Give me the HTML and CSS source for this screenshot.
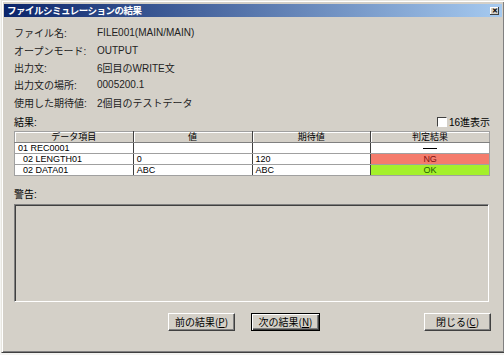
FILE: index.html
```html
<!DOCTYPE html>
<html lang="ja">
<head>
<meta charset="UTF-8">
<title>ファイルシミュレーションの結果</title>
<link rel="stylesheet" href="styles.css">
</head>
<body>
<div class="window">
	<div class="titlebar">
		<span class="title">ファイルシミュレーションの結果</span>
		<span class="close">&#x2715;</span>
	</div>
	<div class="content">
		<div class="info">
			<span>ファイル名:</span><span>FILE001(MAIN/MAIN)</span>
			<span>オープンモード:</span><span>OUTPUT</span>
			<span>出力文:</span><span>6回目のWRITE文</span>
			<span>出力文の場所:</span><span>0005200.1</span>
			<span>使用した期待値:</span><span>2個目のテストデータ</span>
		</div>
		<div class="result-head">
			<span>結果:</span>
			<label class="check"><span class="box"></span>16進表示</label>
		</div>
		<table class="grid">
			<thead>
				<tr><th>データ項目</th><th>値</th><th>期待値</th><th>判定結果</th></tr>
			</thead>
			<tbody>
				<tr><td>01&nbsp;REC0001</td><td></td><td></td><td class="judge"><span class="dash"></span></td></tr>
				<tr><td class="lv2">02&nbsp;LENGTH01</td><td>0</td><td>120</td><td class="judge ng">NG</td></tr>
				<tr><td class="lv2">02&nbsp;DATA01</td><td>ABC</td><td>ABC</td><td class="judge ok">OK</td></tr>
			</tbody>
		</table>
		<div class="warn-label">警告:</div>
		<div class="warn-box"></div>
		<div class="buttons">
			<div class="center-btns">
				<button class="btn">前の結果(<u>P</u>)</button>
				<button class="btn default">次の結果(<u>N</u>)</button>
			</div>
			<button class="btn close-btn">閉じる(<u>C</u>)</button>
		</div>
	</div>
</div>
</body>
</html>
```

FILE: styles.css
```css
body {
	margin: 0;
	background: #f4f4f2;
	font-family: "Liberation Sans", "Noto Sans CJK JP", sans-serif;
	font-size: 10px;
	color: #000;
}

.window {
	width: 498px;
	height: 346px;
	margin: 0 0 0 1px;
	background: #d4d0c8;
	border: 1px solid;
	border-color: #e8e6e0 #404040 #404040 #e8e6e0;
	box-shadow: inset 1px 1px #fff, inset -1px -1px #808080;
	padding: 3px 2px 2px 2px;
	display: flex;
	flex-direction: column;
}

.titlebar {
	height: 13px;
	background: linear-gradient(to right, #0a246a, #a6caf0);
	display: flex;
	align-items: center;
	justify-content: space-between;
	padding: 0 3px 0 3px;
}

.title {
	color: #fff;
	font-weight: bold;
	font-size: 9.5px;
	letter-spacing: -0.5px;
	line-height: 13px;
	font-family: "Noto Sans CJK JP", sans-serif;
}

.close {
	width: 9px;
	height: 8px;
	background: #d4d0c8;
	box-shadow: inset -1px -1px #404040, inset 1px 1px #fff;
	font-size: 7px;
	line-height: 8px;
	text-align: center;
	font-weight: bold;
	color: #000;
}

.content {
	flex: 1;
	display: flex;
	flex-direction: column;
	padding: 7px 12px 0 10px;
}

.info {
	display: grid;
	grid-template-columns: 83px auto;
	grid-auto-rows: 17.4px;
	align-items: center;
	color: #222;
}

.result-head {
	display: flex;
	justify-content: space-between;
	align-items: center;
	margin-top: 4px;
	height: 14px;
}

.check {
	display: flex;
	align-items: center;
	gap: 2px;
}

.box {
	width: 8px;
	height: 8px;
	background: #fff;
	border: 1px solid;
	border-color: #404040 #fff #fff #404040;
}

.grid {
	margin-top: 2px;
	width: 476px;
	border-collapse: collapse;
	table-layout: fixed;
	border: 1px solid #a0a0a0;
	font-size: 9px;
}

.grid th {
	background: #d4d0c8;
	font-weight: normal;
	height: 10px;
	line-height: 10px;
	padding: 0;
	border-right: 1px solid #404040;
	border-bottom: 1px solid #808080;
	box-shadow: inset 1px 1px #fff;
	text-align: center;
	font-family: "Noto Sans CJK JP", sans-serif;
	font-size: 9px;
	overflow: hidden;
}

.grid th:last-child {
	border-right: none;
}

.grid td {
	background: #fff;
	height: 10px;
	line-height: 10px;
	padding: 0 3px;
	border-right: 1px solid #404040;
	border-bottom: 1px solid #a0a0a0;
	white-space: nowrap;
	overflow: hidden;
}

.grid td:last-child {
	border-right: none;
}

.grid td.lv2 {
	padding-left: 8px;
}

.grid td.judge {
	text-align: center;
}

.dash {
	display: inline-block;
	width: 14px;
	height: 1px;
	background: #000;
	vertical-align: middle;
}

.grid td.ng {
	background: #f47c6c;
	color: #801010;
}

.grid td.ok {
	background: #a4f02c;
	color: #206000;
}

.warn-label {
	margin-top: 12px;
	height: 14px;
	line-height: 14px;
}

.warn-box {
	margin-top: 2px;
	width: 473px;
	height: 96px;
	border: 1px solid;
	border-color: #808080 #fff #fff #808080;
	box-shadow: inset 1px 1px #404040;
}

.buttons {
	margin-top: 11px;
	display: flex;
	justify-content: space-between;
	align-items: center;
	width: 477px;
}

.center-btns {
	display: flex;
	gap: 16px;
	margin-left: 154px;
}

.btn {
	width: 67px;
	height: 18px;
	padding: 0;
	background: #d4d0c8;
	border: 1px solid;
	border-color: #fff #404040 #404040 #fff;
	box-shadow: inset -1px -1px #808080;
	font-family: "Noto Sans CJK JP", sans-serif;
	font-size: 10px;
	line-height: 14px;
	color: #000;
}

.btn.default {
	width: 69px;
	border: 1px solid #000;
	box-shadow: inset 1px 1px #fff, inset -1px -1px #404040, inset -2px -2px #808080;
}
```
